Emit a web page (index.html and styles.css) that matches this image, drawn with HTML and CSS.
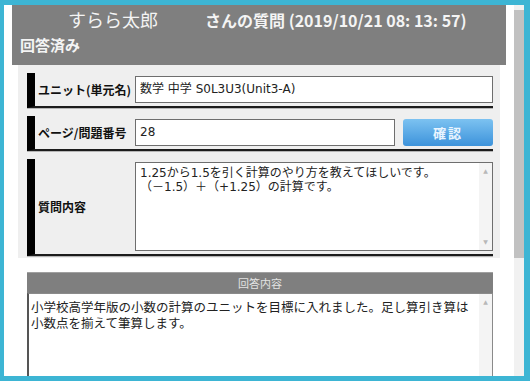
FILE: index.html
```html
<!DOCTYPE html>
<html lang="ja">
<head>
  <meta charset="UTF-8" />
  <title>質問詳細</title>
  <link rel="stylesheet" href="styles.css">
</head>
<body>
  <div class="frame">
    <div class="page">
      <div class="question-head">
        <div class="head-title">
          <span class="student-name">すらら太郎</span>
          <span class="question-date">さんの質問 (2019/10/21 08: 13: 57)</span>
        </div>
        <div class="head-status">回答済み</div>
      </div>

      <div class="form-panel">
        <div class="row">
          <div class="row-label">ユニット(単元名)</div>
          <div class="field">数学 中学 S0L3U3(Unit3-A)</div>
        </div>
        <div class="row">
          <div class="row-label">ページ/問題番号</div>
          <div class="field field-short">28</div>
          <button class="confirm-btn">確認</button>
        </div>
        <div class="row">
          <div class="row-label">質問内容</div>
          <div class="field field-area">
            <div class="area-text">1.25から1.5を引く計算のやり方を教えてほしいです。<br>（－1.5）＋（+1.25）の計算です。</div>
            <div class="area-scroll"><span>▲</span><span>▼</span></div>
          </div>
        </div>
      </div>

      <div class="answer">
        <div class="answer-head">回答内容</div>
        <div class="answer-body">
          <div class="answer-text">
            <p>小学校高学年版の小数の計算のユニットを目標に入れました。足し算引き算は</p>
            <p>小数点を揃えて筆算します。</p>
          </div>
          <div class="area-scroll"><span>▲</span></div>
        </div>
      </div>
    </div>
    <div class="vscroll"><div class="thumb"></div></div>
  </div>
</body>
</html>
```

FILE: styles.css
```css
body {
  margin: 0;
  font-family: 'Noto Sans CJK JP', sans-serif;
  background: #fff;
  color: #222;
  overflow: hidden;
}

.frame {
  display: flex;
  height: 381px;
  box-sizing: border-box;
  border: solid #3db5d4;
  border-width: 5px 6px 5px 4px;
  overflow: hidden;
}

.page {
  flex: 1;
  padding: 0 8px;
  overflow: hidden;
}

.vscroll {
  width: 10px;
  padding-top: 5px;
  background: #f1f1f1;
}

.vscroll .thumb {
  height: 248px;
  background: #c1c1c1;
}

.question-head {
  height: 60px;
  background: #7f7f7f;
  color: #f4f4f4;
}

.head-title {
  display: flex;
  align-items: baseline;
  padding-left: 56px;
  line-height: 28px;
}

.student-name {
  font-size: 18px;
  margin-right: 47px;
}

.question-date {
  font-size: 16px;
  font-weight: bold;
}

.head-status {
  margin-top: 1px;
  padding-left: 8px;
  font-size: 15px;
  font-weight: bold;
  line-height: 20px;
}

.form-panel {
  margin: 0 6px;
  padding: 8px 7px 2px 9px;
  background: #efefef;
}

.row {
  display: flex;
  align-items: center;
  padding: 3px 0;
  border-left: 8px solid #000;
  border-bottom: 2px solid #1c1c1c;
  box-shadow: 0 1px 0 #b5b5b5;
}

.row + .row {
  margin-top: 8px;
}

.row-label {
  width: 100px;
  flex-shrink: 0;
  box-sizing: border-box;
  padding-left: 3px;
  font-size: 12px;
  font-weight: bold;
  color: #111;
}

.field {
  flex: 1;
  height: 27px;
  box-sizing: border-box;
  padding: 0 4px;
  background: #fff;
  border: 1px solid #6e6e6e;
  font-family: 'DejaVu Sans', 'Noto Sans CJK JP', sans-serif;
  font-size: 12px;
  line-height: 25px;
  color: #222;
}

.field-short {
  flex: 0 0 260px;
}

.confirm-btn {
  width: 90px;
  height: 27px;
  margin-left: 8px;
  border: 0;
  border-radius: 3px;
  background: linear-gradient(#7cc2f1, #3d93db);
  color: #eaf5ff;
  font-family: inherit;
  font-size: 13px;
  font-weight: bold;
  letter-spacing: 2px;
}

.field-area {
  display: flex;
  height: 89px;
  padding: 0;
}

.area-text {
  flex: 1;
  padding: 3px 4px;
  line-height: 14px;
}

.area-scroll {
  width: 13px;
  display: flex;
  flex-direction: column;
  justify-content: space-between;
  align-items: center;
  padding: 4px 0;
  background: #f4f4f4;
  color: #b8b8b8;
  font-family: 'DejaVu Sans', sans-serif;
  font-size: 6px;
  line-height: 8px;
}

.answer {
  margin: 14px 13px 0 15px;
}

.answer-head {
  height: 21px;
  background: #7f7f7f;
  border-top: 1px solid #a0a0a0;
  box-sizing: border-box;
  color: #e2e2e2;
  font-size: 11px;
  line-height: 20px;
  text-align: center;
}

.answer-body {
  display: flex;
  height: 100px;
  border: 1px solid #8a8a8a;
  border-left: 2px solid #555;
  background: #fff;
}

.answer-text {
  flex: 1;
  padding: 5px 2px;
  font-size: 12.5px;
  line-height: 16px;
  color: #222;
}

.answer-text p {
  margin: 0;
}

.answer-body .area-scroll {
  justify-content: flex-start;
}
```
